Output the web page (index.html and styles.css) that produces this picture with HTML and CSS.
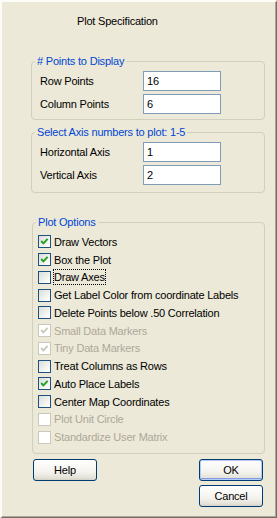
FILE: index.html
```html
<!DOCTYPE html>
<html lang="en">
<head>
  <meta charset="UTF-8">
  <title>Plot Specification</title>
  <link rel="stylesheet" href="styles.css">
</head>
<body>
  <div class="dialog">
    <div class="title">Plot Specification</div>

    <fieldset class="group group-points">
      <legend># Points to Display</legend>
      <div class="group-body fields">
        <div class="field-row">
          <label for="row-points">Row Points</label>
          <input id="row-points" class="input-field" type="text" value="16">
        </div>
        <div class="field-row">
          <label for="column-points">Column Points</label>
          <input id="column-points" class="input-field" type="text" value="6">
        </div>
      </div>
    </fieldset>

    <fieldset class="group group-axis">
      <legend>Select Axis numbers to plot: 1-5</legend>
      <div class="group-body fields">
        <div class="field-row">
          <label for="horizontal-axis">Horizontal Axis</label>
          <input id="horizontal-axis" class="input-field" type="text" value="1">
        </div>
        <div class="field-row">
          <label for="vertical-axis">Vertical Axis</label>
          <input id="vertical-axis" class="input-field" type="text" value="2">
        </div>
      </div>
    </fieldset>

    <fieldset class="group group-options">
      <legend>Plot Options</legend>
      <div class="group-body options">
        <div class="option checked"><span class="box"><svg viewBox="0 0 11 11"><polyline points="2.2,5 4.4,7.3 8.6,2.9"/></svg></span><span class="text">Draw Vectors</span></div>
        <div class="option checked"><span class="box"><svg viewBox="0 0 11 11"><polyline points="2.2,5 4.4,7.3 8.6,2.9"/></svg></span><span class="text">Box the Plot</span></div>
        <div class="option focused"><span class="box"></span><span class="text">Draw Axes</span></div>
        <div class="option"><span class="box"></span><span class="text">Get Label Color from coordinate Labels</span></div>
        <div class="option"><span class="box"></span><span class="text">Delete Points below .50 Correlation</span></div>
        <div class="option checked disabled"><span class="box"><svg viewBox="0 0 11 11"><polyline points="2.2,5 4.4,7.3 8.6,2.9"/></svg></span><span class="text">Small Data Markers</span></div>
        <div class="option checked disabled"><span class="box"><svg viewBox="0 0 11 11"><polyline points="2.2,5 4.4,7.3 8.6,2.9"/></svg></span><span class="text">Tiny Data Markers</span></div>
        <div class="option"><span class="box"></span><span class="text">Treat Columns as Rows</span></div>
        <div class="option checked"><span class="box"><svg viewBox="0 0 11 11"><polyline points="2.2,5 4.4,7.3 8.6,2.9"/></svg></span><span class="text">Auto Place Labels</span></div>
        <div class="option"><span class="box"></span><span class="text">Center Map Coordinates</span></div>
        <div class="option disabled"><span class="box"></span><span class="text">Plot Unit Circle</span></div>
        <div class="option disabled"><span class="box"></span><span class="text">Standardize User Matrix</span></div>
      </div>
    </fieldset>

    <div class="button-row">
      <button class="button">Help</button>
      <div class="button-stack">
        <button class="button default">OK</button>
        <button class="button">Cancel</button>
      </div>
    </div>
  </div>
</body>
</html>
```

FILE: styles.css
```css
body {
  margin: 0;
  font-family: "Liberation Sans", Arial, sans-serif;
  font-size: 11px;
  letter-spacing: -0.2px;
  color: #000;
}
.dialog {
  width: 277px;
  height: 518px;
  box-sizing: border-box;
  background-color: #ECE9D8;
  border-style: solid;
  border-width: 2px 1px 1px 2px;
  border-color: #FDFCF7 #716F64 #716F64 #FDFCF7;
  box-shadow: inset -1px -1px 0 #ACA899;
}
.title {
  padding: 13px 0 0 75px;
  line-height: 13px;
}

/* group boxes */
.group {
  margin: 0;
  padding: 0;
  border: 1px solid #D0D0BF;
  border-radius: 4px;
  box-sizing: border-box;
  min-inline-size: 0;
}
.group legend {
  margin-left: 3px;
  padding: 0 2px;
  line-height: 13px;
  color: #0046D5;
}
.group-points {
  margin: 27px 0 0 29px;
  width: 234px;
}
.group-axis {
  margin: 6px 0 0 29px;
  width: 234px;
}
.group-options {
  margin: 23px 0 0 30px;
  width: 233px;
}
.fields {
  display: flex;
  flex-direction: column;
  gap: 3px;
  padding: 3px 0 5px 8px;
}
.group-axis .fields {
  padding-bottom: 7px;
}
.field-row {
  display: flex;
  align-items: center;
}
.field-row label {
  width: 103px;
}
.input-field {
  width: 78px;
  height: 20px;
  box-sizing: border-box;
  margin: 0;
  padding: 0 3px;
  border: 1px solid #7F9DB9;
  background: #fff;
  font-family: inherit;
  font-size: 11px;
  letter-spacing: inherit;
  color: #000;
}

/* check boxes */
.options {
  padding: 4px 0 7px 5px;
}
.option {
  display: flex;
  align-items: center;
  height: 17.75px;
}
.box {
  width: 13px;
  height: 13px;
  box-sizing: border-box;
  border: 1px solid #1C5180;
  background: linear-gradient(135deg, #DCDCD7, #F6F6F3 70%, #fff);
  margin-right: 2px;
  flex-shrink: 0;
}
.box svg {
  display: block;
  width: 11px;
  height: 11px;
}
.box polyline {
  fill: none;
  stroke: #21A121;
  stroke-width: 1.9;
}
.text {
  border: 1px dotted transparent;
  padding: 0;
  line-height: 14px;
}
.focused .text {
  border-color: #000;
}
.disabled .box {
  border-color: #CAC8BB;
  background: #fff;
}
.disabled .box polyline {
  stroke: #CAC8BB;
}
.disabled .text {
  color: #ACA899;
}

/* buttons */
.button-row {
  display: flex;
  justify-content: space-between;
  align-items: flex-start;
  margin-top: 5px;
  padding: 0 13px 0 31px;
}
.button-stack {
  display: flex;
  flex-direction: column;
  gap: 4px;
}
.button {
  width: 64px;
  height: 22px;
  padding: 0;
  border: 1px solid #003C74;
  border-radius: 3px;
  background: linear-gradient(#FFFFFF, #F4F3EE 60%, #E3E1D7 90%, #D6D0C5);
  font-family: inherit;
  font-size: 11px;
  letter-spacing: inherit;
  color: #000;
}
.button.default {
  box-shadow: inset 0 0 0 1px #B4CBF6, inset 0 -1px 0 1px #7C9CE3;
}
```
